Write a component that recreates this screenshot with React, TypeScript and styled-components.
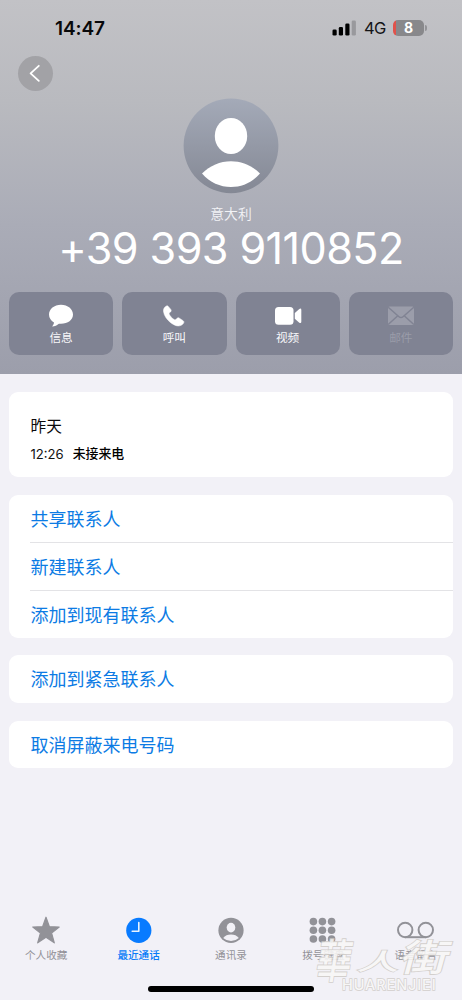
import React from 'react';
import styled, { createGlobalStyle } from 'styled-components';

const Global = createGlobalStyle`
  * { box-sizing: border-box; }
  body { margin: 0; background: #f2f1f7; font-family: Inter, "Noto Sans CJK SC", sans-serif; }
`;

const Screen = styled.div`
  position: relative;
  width: 462px;
  height: 1000px;
  display: flex;
  flex-direction: column;
  background: #f2f1f7;
  overflow: hidden;
  white-space: nowrap;
`;

const Header = styled.header`
  height: 374px;
  flex: none;
  display: flex;
  flex-direction: column;
  align-items: center;
  background: linear-gradient(#c2c2c6 0%, #b9babf 27%, #aaacb7 60%, #9c9eab 100%);
`;

const StatusBar = styled.div`
  width: 100%;
  height: 56px;
  padding: 0 35px 0 55px;
  display: flex;
  align-items: center;
  justify-content: space-between;
`;

const Clock = styled.div`
  padding-top: 1px;
  font-size: 19px;
  line-height: 24px;
  font-weight: 600;
  letter-spacing: -0.1px;
  color: #08080a;
`;

const StatusIcons = styled.div`
  display: flex;
  align-items: center;
`;

const Network = styled.span`
  margin: 0 7px 0 8px;
  width: 22px;
  font-size: 16.5px;
  line-height: 20px;
  letter-spacing: -0.6px;
  color: #141416;
`;

const Battery = styled.div`
  width: 31px;
  height: 16px;
  border-radius: 5px;
  display: flex;
  align-items: center;
  justify-content: center;
  background: linear-gradient(90deg, #e0524b 0 3px, #88888b 3px);
  color: #fff;
  font-size: 14px;
  line-height: 16px;
  font-weight: 700;
`;

const BatteryTip = styled.span`
  width: 2px;
  height: 6px;
  margin-left: 1px;
  border-radius: 0 2px 2px 0;
  background: #939397;
`;

const BackRow = styled.div`
  width: 100%;
  height: 42px;
  padding: 0.4px 18.4px 0;
`;

const BackButton = styled.button`
  width: 35px;
  height: 35px;
  padding: 0;
  border: 0;
  border-radius: 50%;
  display: block;
  background: #a2a2a6;
`;

const Avatar = styled.svg`
  display: block;
  flex: none;
`;

const Country = styled.div`
  margin-top: 10px;
  font-size: 13.8px;
  line-height: 20px;
  font-weight: 350;
  color: #f3f3f6;
`;

const Phone = styled.h1`
  margin: -1px 0 0;
  height: 69px;
  font-size: 43.2px;
  line-height: 50px;
  font-weight: 400;
  letter-spacing: -0.6px;
  color: #fff;
`;

const Actions = styled.div`
  width: 100%;
  padding: 0 9px;
  display: grid;
  grid-template-columns: repeat(4, 1fr);
  gap: 9px;
`;

const ActionButton = styled.button<{ $disabled?: boolean }>`
  height: 63px;
  padding: 11px 0 0;
  border: 0;
  border-radius: 10px;
  display: flex;
  flex-direction: column;
  align-items: center;
  background: #808393;
  font-family: inherit;
  font-size: 11.7px;
  font-weight: 400;
  line-height: 18px;
  color: ${p => (p.$disabled ? '#9a9ca9' : '#f7f7fa')};

  svg { display: block; }
`;

const Content = styled.main`
  flex: 1;
  padding: 18px 9px 0;
  display: flex;
  flex-direction: column;
  gap: 17.5px;
`;

const Card = styled.section`
  border-radius: 9px;
  background: #fff;
  overflow: hidden;
`;

const CallLog = styled(Card)`
  height: 85px;
  padding: 23px 21.5px 0;
`;

const Day = styled.div`
  font-size: 15.7px;
  line-height: 24px;
  color: #0b0b0c;
`;

const CallRow = styled.div`
  margin-top: 5px;
  display: flex;
  gap: 9px;
  font-size: 13.1px;
  line-height: 20px;
  color: #111;
`;

const CallKind = styled.span`
  font-size: 12.9px;
  font-weight: 500;
  color: #000;
`;

const LinkRow = styled.div`
  margin-left: 21px;
  padding-left: 0.6px;
  height: 47.8px;
  font-size: 18px;
  line-height: 50px;
  color: #0c7be4;

  & + & { border-top: 1px solid #e3e3e6; line-height: 49.5px; }
`;

const TabBar = styled.nav`
  height: 100px;
  padding-top: 15px;
  display: grid;
  grid-template-columns: repeat(5, 1fr);
`;

const Tab = styled.div<{ $active?: boolean }>`
  display: flex;
  flex-direction: column;
  align-items: center;
  font-size: 10.6px;
  font-weight: ${p => (p.$active ? 500 : 400)};
  line-height: 18px;
  color: ${p => (p.$active ? '#087bf8' : '#929298')};

  svg { display: block; margin-bottom: 2px; }
`;

const HomeIndicator = styled.div`
  position: absolute;
  left: 148px;
  top: 986px;
  width: 166px;
  height: 5.5px;
  border-radius: 3px;
  background: #000;
`;

const Watermark = styled.div`
  position: absolute;
  left: 312px;
  top: 933px;
  width: 150px;
  height: 60px;
  color: #f8f7f6;
  opacity: 0.88;
  -webkit-text-stroke: 1.6px #cfcbc7;
  paint-order: stroke fill;
`;

const Brand = styled.div`
  display: flex;
  height: 42px;
  align-items: center;
  font-family: "Noto Sans CJK TC", sans-serif;
  font-weight: 500;
  line-height: 42px;
`;

const BrandChar = styled.span<{ $size: number; $wide: number; $tall: number; $shift: number }>`
  width: 46px;
  text-align: center;
  font-size: ${p => p.$size}px;
  transform: translateY(${p => p.$shift}px) scale(${p => p.$wide}, ${p => p.$tall}) skewX(-12deg);
`;

const BrandLatin = styled.div`
  padding-left: 30px;
  font-size: 14.5px;
  line-height: 19px;
  font-weight: 500;
  letter-spacing: 0.9px;
  -webkit-text-stroke-width: 1.4px;
`;

const tabs = [
  {
    label: '个人收藏',
    icon: (
      <path d="M15 2.2 18.4 11.7 28.2 12 20.6 18.1 23.3 27.8 15 22.2 6.7 27.8 9.4 18.1 1.8 12 11.6 11.7Z" fill="currentColor" stroke="currentColor" strokeWidth="1.2" strokeLinejoin="round" />
    ),
  },
  {
    label: '最近通话',
    active: true,
    icon: (
      <>
        <circle cx="14.8" cy="15.4" r="12.6" fill="#087bff" />
        <path d="M14.8 7.6v8.6H8.2" fill="none" stroke="#e8f3ff" strokeWidth="1.6" strokeLinecap="round" strokeLinejoin="round" />
      </>
    ),
  },
  {
    label: '通讯录',
    icon: (
      <>
        <circle cx="15" cy="15.4" r="12.6" fill="currentColor" />
        <ellipse cx="15" cy="12.6" rx="4.3" ry="4.9" fill="#f2f1f7" />
        <path d="M7.2 23Q10 19.6 15 19.6T22.8 23Q19.6 26 15 26T7.2 23Z" fill="#f2f1f7" />
      </>
    ),
  },
  {
    label: '拨号键盘',
    icon: (
      <g fill="currentColor">
        {[5.4, 14.4, 23.6].map(x => [6.6, 15.3, 24].map(y => <circle key={`${x}-${y}`} cx={x} cy={y} r="3.8" />))}
      </g>
    ),
  },
  {
    label: '语音留言',
    wide: true,
    icon: (
      <g fill="none" stroke="currentColor" strokeWidth="2">
        <circle cx="8.2" cy="15" r="7.2" />
        <circle cx="28.8" cy="15" r="7.2" />
        <path d="M8.200 22.200h20.600" />
      </g>
    ),
  },
];

export default function App() {
  return (
    <Screen>
      <Global />
      <Header>
        <StatusBar>
          <Clock>14:47</Clock>
          <StatusIcons>
            <svg width="24" height="16" viewBox="0 0 24 16">
              <rect x="0.5" y="9.5" width="4.2" height="6" rx="1.3" />
              <rect x="6.8" y="7" width="4.2" height="8.5" rx="1.3" />
              <rect x="13.3" y="3.5" width="4.2" height="12" rx="1.3" />
              <rect x="19.7" y="0.5" width="4.2" height="15" rx="1.3" fill="#99999d" />
            </svg>
            <Network>4G</Network>
            <Battery>8</Battery>
            <BatteryTip />
          </StatusIcons>
        </StatusBar>
        <BackRow>
          <BackButton aria-label="返回">
            <svg width="35" height="35" viewBox="0 0 35 35">
              <path d="M20.800 9.800 12.600 17.300 20.800 24.800" fill="none" stroke="#fff" strokeWidth="1.8" strokeLinecap="round" strokeLinejoin="round" />
            </svg>
          </BackButton>
        </BackRow>
        <Avatar width="96" height="96" viewBox="0 0 96 96">
          <defs>
            <linearGradient id="avatar" x1="0" y1="0" x2="0" y2="1">
              <stop offset="0" stopColor="#a4aab8" />
              <stop offset="1" stopColor="#848894" />
            </linearGradient>
          </defs>
          <circle cx="48" cy="47.8" r="47.4" fill="url(#avatar)" />
          <ellipse cx="48" cy="38" rx="16.2" ry="18" fill="#fff" />
          <path d="M19 75.5C27 67.5 37 63.2 48 63.2S69 67.5 77 75.5C69 84.500 59 89 48 89S27 84.500 19 75.500Z" fill="#fff" />
        </Avatar>
        <Country>意大利</Country>
        <Phone>+39 393 9110852</Phone>
        <Actions>
          <ActionButton>
            <svg width="30" height="26" viewBox="0 0 30 26">
              <path d="M15 1.800C8.200 1.800 3 6.100 3 11.500c0 3.400 1.900 6.200 5 8-.1 1.500-.8 2.800-1.900 4 2.800-.2 5-1.200 6.800-2.800l2.100.1c6.800 0 12-4 12-9.300S21.800 1.800 15 1.800Z" fill="#fff" />
            </svg>
            信息
          </ActionButton>
          <ActionButton>
            <svg width="30" height="26" viewBox="0 0 30 26">
              <path d="M7.500 3C5.300 3.900 4.200 6 4.500 8.500c.6 4.200 3.200 7.700 6.300 10.400 2.900 2.500 6.500 4.600 9.900 3.900 2-.4 3.700-1.800 4.100-3.200.2-.8 0-1.400-.7-1.900l-3.700-2.500c-1-.7-1.800-.5-2.600.3l-1 1c-.5.5-1 .5-1.600.1-2.100-1.300-3.900-3.300-5-5.400-.3-.6-.2-1 .3-1.400l1-.9c.8-.7.9-1.500.3-2.500L9.500 3.700C9 2.900 8.300 2.700 7.500 3Z" fill="#fff" stroke="#fff" strokeWidth="0.5" />
            </svg>
            呼叫
          </ActionButton>
          <ActionButton>
            <svg width="30" height="26" viewBox="0 0 30 26">
              <rect x="2" y="4" width="18.500" height="17.700" rx="3.500" fill="#fff" />
              <path d="M21.800 10 26.300 6Q28.300 4.700 28.300 6.900V18.700Q28.300 20.900 26.300 19.700L21.800 15.700Z" fill="#fff" />
            </svg>
            视频
          </ActionButton>
          <ActionButton $disabled>
            <svg width="30" height="26" viewBox="0 0 30 26">
              <rect x="2" y="3.500" width="26" height="18.500" rx="1.500" fill="#9b9daa" />
              <path d="M2.200 4.200 13 13.700Q15 15.400 17 13.700L27.800 4.200M2.200 21.500 11.800 12.700M27.800 21.500 18.200 12.700" fill="none" stroke="#808393" strokeWidth="1.500" />
            </svg>
            邮件
          </ActionButton>
        </Actions>
      </Header>
      <Content>
        <CallLog>
          <Day>昨天</Day>
          <CallRow>
            <span>12:26</span>
            <CallKind>未接来电</CallKind>
          </CallRow>
        </CallLog>
        <Card>
          <LinkRow>共享联系人</LinkRow>
          <LinkRow>新建联系人</LinkRow>
          <LinkRow>添加到现有联系人</LinkRow>
        </Card>
        <Card>
          <LinkRow>添加到紧急联系人</LinkRow>
        </Card>
        <Card>
          <LinkRow>取消屏蔽来电号码</LinkRow>
        </Card>
      </Content>
      <TabBar>
        {tabs.map(t => (
          <Tab key={t.label} $active={t.active}>
            <svg width={t.wide ? 37 : 30} height="30" viewBox={t.wide ? '0 0 37 30' : '0 0 30 30'}>{t.icon}</svg>
            {t.label}
          </Tab>
        ))}
      </TabBar>
      <HomeIndicator />
      <Watermark>
        <Brand>
          <BrandChar $size={40} $wide={0.88} $tall={1.15} $shift={4}>華</BrandChar>
          <BrandChar $size={31} $wide={1.35} $tall={0.75} $shift={6}>人</BrandChar>
          <BrandChar $size={37} $wide={1.3} $tall={1} $shift={1}>街</BrandChar>
        </Brand>
        <BrandLatin>HUARENJIEI</BrandLatin>
      </Watermark>
    </Screen>
  );
}
